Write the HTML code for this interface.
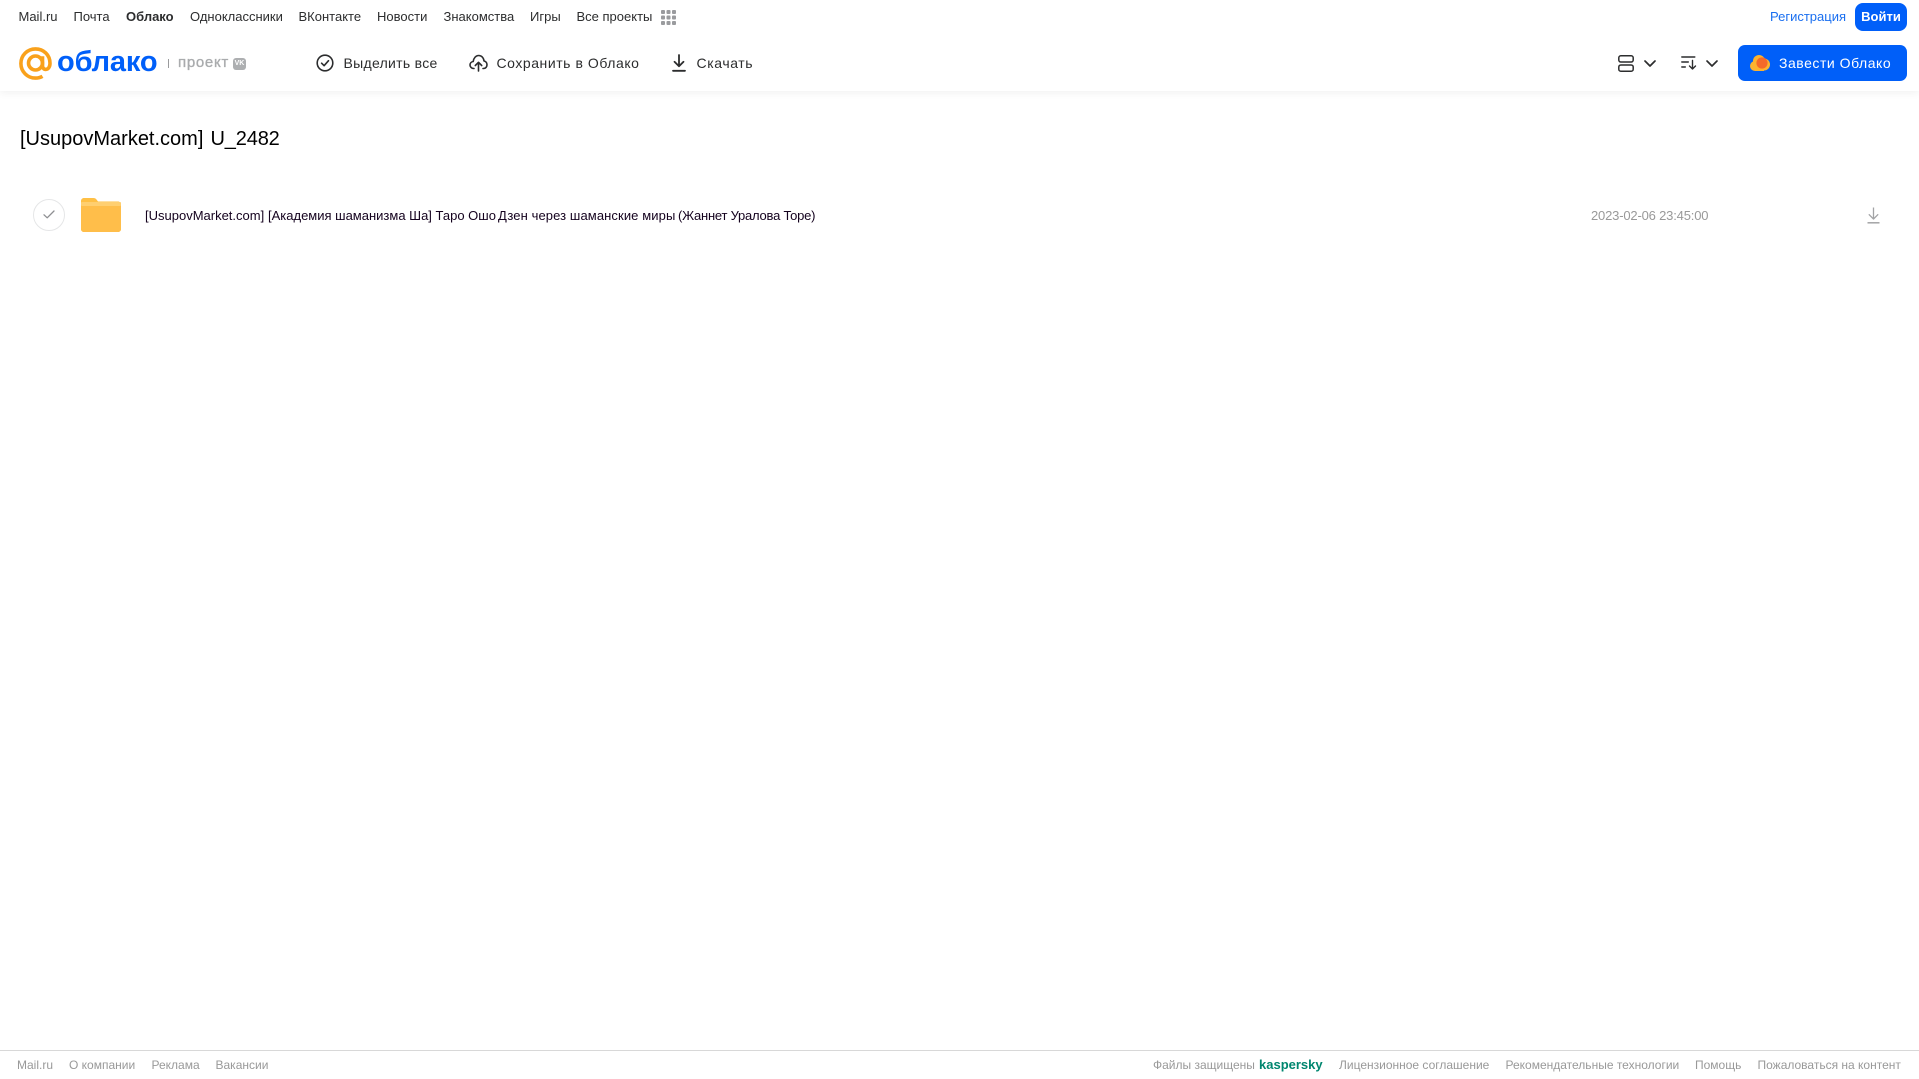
<!DOCTYPE html>
<html lang="ru"><head><meta charset="utf-8"><title>Облако</title>
<style>
html,body{margin:0;padding:0;background:#fff;}
body{width:1919px;height:1079px;overflow:hidden;position:relative;font-family:"Liberation Sans",Arial,sans-serif;}
.t{position:absolute;white-space:nowrap;line-height:20px;height:20px;}
.n{top:7px;font-size:13px;color:#2c2d2e;}
.m{top:52.500px;font-size:14px;color:#2c2d2e;}
.r{top:206px;font-size:13px;color:#14021e;}
.f{top:1055px;font-size:12px;color:#999;}
svg{position:absolute;overflow:visible;}
</style></head><body>
<div style="position:absolute;left:0;top:0;width:1919px;height:91px;background:#fff;box-shadow:0 2px 8px rgba(0,0,0,.06);"></div>

<span class="t n" style="left:18.500px">Mail.ru</span>
<span class="t n" style="left:73.500px">Почта</span>
<span class="t n" style="left:126px;font-weight:700">Облако</span>
<span class="t n" style="left:190px">Одноклассники</span>
<span class="t n" style="left:298.500px">ВКонтакте</span>
<span class="t n" style="left:377px">Новости</span>
<span class="t n" style="left:443.500px">Знакомства</span>
<span class="t n" style="left:530px">Игры</span>
<span class="t n" style="left:576.500px">Все проекты</span>
<svg style="left:661px;top:10px" width="15" height="15" fill="#9a9b9e"><rect width="4" height="4" rx="1"/><rect x="5.500" width="4" height="4" rx="1"/><rect x="11" width="4" height="4" rx="1"/><rect y="5.500" width="4" height="4" rx="1"/><rect x="5.500" y="5.500" width="4" height="4" rx="1"/><rect x="11" y="5.500" width="4" height="4" rx="1"/><rect y="11" width="4" height="4" rx="1"/><rect x="5.500" y="11" width="4" height="4" rx="1"/><rect x="11" y="11" width="4" height="4" rx="1"/></svg>
<span class="t n" style="left:1770px;color:#1a6ff0">Регистрация</span>
<div class="t" style="left:1855px;top:3px;width:52px;height:28px;line-height:27px;background:#005ff9;border-radius:8px;color:#fff;font-size:13px;font-weight:700;text-align:center;">Войти</div>

<svg style="left:19px;top:47px" width="33" height="33" viewBox="0 0 33 33" fill="none" stroke="#f9a11b" stroke-width="3.600"><circle cx="16.500" cy="16" r="7"/><path d="M23.500 9.300v9c0 2.800 1.500 4.100 3.200 4.100 2.300 0 4.300-2.200 4.300-6.100C31 7.800 24.500 1.900 16.500 1.900 8.400 1.900 1.900 8.400 1.900 16.500S8.400 31.100 16.500 31.100c2.800 0 5-.6 7-1.800"/></svg>
<span class="t" style="left:57px;top:47px;height:30px;line-height:30px;font-size:29px;font-weight:700;color:#005ff9;letter-spacing:-.15px;">облако</span>
<div style="position:absolute;left:168px;top:59px;width:1px;height:9px;background:#9a9b9d"></div>
<span class="t" style="left:178px;top:53px;font-size:15px;color:#a9abad;letter-spacing:.7px;-webkit-text-stroke:.35px #a9abad;">проект</span>
<div style="position:absolute;left:233px;top:58px;width:13px;height:12px;background:#adafb1;border-radius:3px;color:#fff;font-size:7px;font-weight:700;line-height:12px;text-align:center;">VK</div>

<svg style="left:316px;top:54px" width="18" height="18" viewBox="0 0 18 18" fill="none" stroke="#2c2d2e" stroke-width="1.600"><circle cx="9" cy="9" r="7.800"/><path d="M5.600 9.200l2.500 2.500 4.400-5" stroke-linecap="round" stroke-linejoin="round"/></svg>
<span class="t m" style="left:343.500px;letter-spacing:.3px">Выделить все</span>
<svg style="left:469px;top:54px" width="19" height="18" viewBox="0 0 19 18" fill="none" stroke="#2c2d2e" stroke-width="1.600" stroke-linecap="round" stroke-linejoin="round"><path d="M5 14.500H4.600C2.600 14.500 1 12.900 1 11c0-1.800 1.400-3.300 3.200-3.500C4.600 4.100 6.800 1.500 9.700 1.500c2.900 0 5.100 2.500 5.300 5.500 1.800.3 3 1.900 3 3.800 0 2-1.400 3.700-3.500 3.700H14"/><path d="M9.500 17V9M6.300 11.500l3.200-3.200 3.200 3.200"/></svg>
<span class="t m" style="left:496.500px;letter-spacing:.55px">Сохранить в Облако</span>
<svg style="left:671px;top:54px" width="16" height="18" viewBox="0 0 16 18" fill="none" stroke="#2c2d2e" stroke-width="1.800" stroke-linecap="round" stroke-linejoin="round"><path d="M8 1v11M3.500 7.800L8 12.300l4.500-4.500M2 16.800h12"/></svg>
<span class="t m" style="left:696.500px;letter-spacing:.6px">Скачать</span>

<svg style="left:1618px;top:55px" width="16" height="17" viewBox="0 0 16 17" fill="none" stroke="#2c2d2e" stroke-width="1.500"><rect x=".8" y=".8" width="14.400" height="6.200" rx="2"/><rect x=".8" y="10" width="14.400" height="6.200" rx="2"/></svg>
<svg style="left:1644px;top:60px" width="12" height="7" viewBox="0 0 12 7" fill="none" stroke="#2c2d2e" stroke-width="1.700" stroke-linecap="round" stroke-linejoin="round"><path d="M1 1l5 5 5-5"/></svg>
<svg style="left:1681px;top:56px" width="16" height="14" viewBox="0 0 16 14" fill="none" stroke="#2c2d2e" stroke-width="1.400" stroke-linecap="round" stroke-linejoin="round"><path d="M.8 1h13M.8 6h6.500M.8 11h3.500M11.500 4.500V13M8.500 10l3 3 3-3"/></svg>
<svg style="left:1706px;top:60px" width="12" height="7" viewBox="0 0 12 7" fill="none" stroke="#2c2d2e" stroke-width="1.700" stroke-linecap="round" stroke-linejoin="round"><path d="M1 1l5 5 5-5"/></svg>

<div style="position:absolute;left:1738px;top:45px;width:169px;height:36px;background:#005ff9;border-radius:7px;"></div>
<svg style="left:1750px;top:55px" width="20" height="16" viewBox="0 0 20 16"><circle cx="5" cy="11" r="5" fill="#fdb32f"/><circle cx="9" cy="6" r="6" fill="#fdb32f"/><circle cx="14" cy="9.500" r="6" fill="#fdb32f"/><rect x="5" y="10" width="9" height="6" fill="#fdb32f"/><circle cx="12" cy="8" r="5.600" fill="#f56a29"/></svg>
<span class="t" style="left:1779px;top:52.500px;font-size:14px;color:#fff;letter-spacing:.53px;">Завести Облако</span>

<span class="t" style="left:20px;top:127px;height:24px;line-height:24px;font-size:20px;color:#000;">[UsupovMarket.com]</span>
<span class="t" style="left:210.500px;top:127px;height:24px;line-height:24px;font-size:20px;color:#000;letter-spacing:-.15px;">U_2482</span>

<div style="position:absolute;left:33px;top:199px;width:30px;height:30px;border:1px solid #e5e6e7;border-radius:50%;"></div>
<svg style="left:43px;top:210px" width="12" height="9" viewBox="0 0 12 9" fill="none" stroke="#8e8f92" stroke-width="1.300" stroke-linecap="round" stroke-linejoin="round"><path d="M1 4.800l3.200 3L11 1"/></svg>
<svg style="left:81px;top:198px" width="40" height="34" viewBox="0 0 40 34"><path d="M0 3C0 1.300 1.300 0 3 0h9.500c1.300 0 2.300.5 3 1.500l1.500 2H37c1.700 0 3 1.300 3 3V31c0 1.700-1.300 3-3 3H3c-1.700 0-3-1.300-3-3z" fill="#ffc045"/><path d="M0 8h40v23c0 1.700-1.300 3-3 3H3c-1.700 0-3-1.300-3-3z" fill="#ffbe4a"/><rect y="4" width="40" height="4" rx="1" fill="#ffcf70"/></svg>
<span class="t r" style="left:145px">[UsupovMarket.com]</span>
<span class="t r" style="left:268px">[Академия шаманизма Ша]</span>
<span class="t r" style="left:435.500px">Таро Ошо</span>
<span class="t r" style="left:498px;letter-spacing:.1px">Дзен через шаманские миры</span>
<span class="t r" style="left:678px;letter-spacing:-.23px">(Жаннет Уралова Торе)</span>
<span class="t" style="left:1591px;top:206px;font-size:13px;color:#999;letter-spacing:-.18px;">2023-02-06 23:45:00</span>
<svg style="left:1867px;top:207px" width="13" height="17" viewBox="0 0 13 17" fill="none" stroke="#a3a4a6" stroke-width="1.300" stroke-linejoin="round"><path d="M6.500 .5v11.500M1.800 7.300L6.500 12l4.700-4.700"/><path d="M.5 15.800h12" stroke-width="1.500"/></svg>

<div style="position:absolute;left:0;top:1050px;width:1919px;height:1px;background:#d8d8d8"></div>
<span class="t f" style="left:17px">Mail.ru</span>
<span class="t f" style="left:69px">О компании</span>
<span class="t f" style="left:151.500px">Реклама</span>
<span class="t f" style="left:215.500px">Вакансии</span>
<span class="t f" style="left:1153px">Файлы защищены</span>
<span class="t f" style="left:1259px;font-weight:700;color:#00866f;font-size:13px">kaspersky</span>
<span class="t f" style="left:1339px">Лицензионное соглашение</span>
<span class="t f" style="left:1505.500px">Рекомендательные технологии</span>
<span class="t f" style="left:1695px">Помощь</span>
<span class="t f" style="left:1757.500px">Пожаловаться на контент</span>
</body></html>
